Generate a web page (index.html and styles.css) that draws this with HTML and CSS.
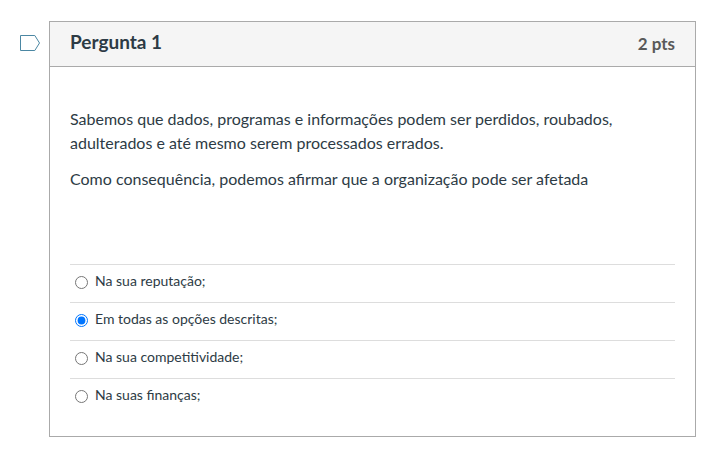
FILE: index.html
```html
<!DOCTYPE html>
<html lang="pt-BR">
<head>
<meta charset="utf-8">
<title>Pergunta 1</title>
<link rel="stylesheet" href="styles.css">
</head>
<body>
<main class="quiz">
  <button class="flag" type="button" aria-label="Marcar pergunta">
    <svg width="20" height="16" viewBox="0 0 20 16" aria-hidden="true"><path d="M.5.5h14.300l4.700 7.500-4.700 7.500H.5z" fill="#fff" stroke="#4b87a3"/></svg>
  </button>
  <section class="question">
    <header class="question-header">
      <h1 class="question-title">Pergunta 1</h1>
      <span class="question-points">2 pts</span>
    </header>
    <div class="question-body">
      <div class="question-text" id="question-text">
        <p>Sabemos que dados, programas e informações podem ser perdidos, roubados, adulterados e até mesmo serem processados errados.</p>
        <p>Como consequência, podemos afirmar que a organização pode ser afetada</p>
      </div>
      <div class="answers" role="radiogroup" aria-labelledby="question-text">
        <label class="answer"><input type="radio" name="answer"><span>Na sua reputação;</span></label>
        <label class="answer"><input type="radio" name="answer" checked><span>Em todas as opções descritas;</span></label>
        <label class="answer"><input type="radio" name="answer"><span>Na sua competitividade;</span></label>
        <label class="answer"><input type="radio" name="answer"><span>Na suas finanças;</span></label>
      </div>
    </div>
  </section>
</main>
</body>
</html>
```

FILE: styles.css
```css
* {
  box-sizing: border-box;
}

body {
  margin: 0;
  background: #fff;
  color: #2d3b45;
  font-family: Lato, "Liberation Sans", sans-serif;
  font-size: 16px;
  line-height: 24px;
}

.quiz {
  display: flex;
  align-items: flex-start;
  padding: 21px 23px 13px 20px;
}

.flag {
  flex: none;
  width: 29px;
  margin: 0;
  padding: 14px 0 0;
  border: 0;
  background: none;
  text-align: left;
  cursor: pointer;
}

.flag svg {
  display: block;
}

.question {
  flex: 1;
  border: 1px solid #aaa;
}

.question-header {
  display: flex;
  align-items: flex-start;
  justify-content: space-between;
  padding: 8px 20px 11px;
  border-bottom: 1px solid #aaa;
  background: #f5f5f5;
}

.question-title {
  margin: 0;
  font-size: 19px;
  font-weight: 700;
}

.question-points {
  padding-top: 3px;
  color: #595959;
  font-size: 17px;
  font-weight: 700;
  line-height: 22px;
}

.question-body {
  padding: 40px 20px 20px;
}

.question-text p {
  margin: 0 0 12px;
}

.answers {
  margin-top: 73px;
}

.answer {
  display: flex;
  align-items: center;
  height: 38px;
  padding-bottom: 2px;
  border-top: 1px solid #ddd;
  font-size: 14px;
  line-height: 20px;
}

.answer input {
  flex: none;
  width: 13px;
  height: 13px;
  margin: 0 7px 0 5px;
}

.answer span {
  padding-bottom: 3px;
}
```
